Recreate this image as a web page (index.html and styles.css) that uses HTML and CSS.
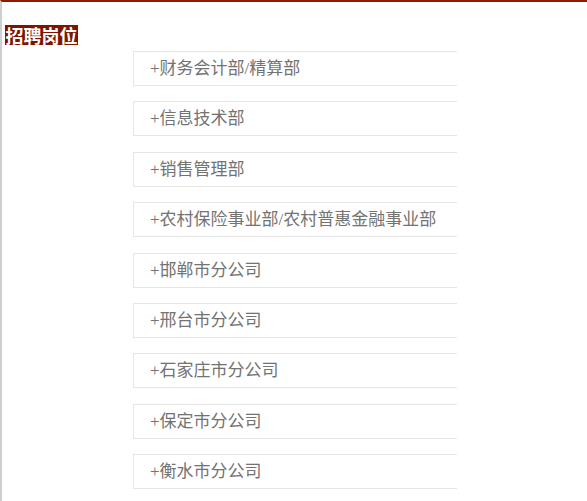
FILE: index.html
```html
<!DOCTYPE html>
<html lang="zh-CN">
<head>
    <meta charset="UTF-8">
    <meta name="viewport" content="width=device-width, initial-scale=1.0">
    <title>招聘岗位</title>
    <link rel="stylesheet" href="styles.css">
</head>
<body>
    <div class="page">
        <h2 class="title">招聘岗位</h2>

        <ul class="jobs">
            <li class="job">+财务会计部/精算部</li>
            <li class="job">+信息技术部</li>
            <li class="job">+销售管理部</li>
            <li class="job">+农村保险事业部/农村普惠金融事业部</li>
            <li class="job">+邯郸市分公司</li>
            <li class="job">+邢台市分公司</li>
            <li class="job">+石家庄市分公司</li>
            <li class="job">+保定市分公司</li>
            <li class="job">+衡水市分公司</li>
        </ul>
    </div>
</body>
</html>
```

FILE: styles.css
```css
html, body {
    margin: 0;
    padding: 0;
    background: #fff;
}
body {
    font-family: "Liberation Serif", "Noto Sans CJK SC", serif;
    overflow: hidden;
}
.page {
    min-height: 100vh;
    box-sizing: border-box;
    border-top: 2px solid #8e1a00;
    border-left: 2px solid #cfcfcf;
    padding: 23px 0 0 3px;
}
.title {
    width: fit-content;
    height: 20px;
    margin: 0;
    padding: 0 0.5px;
    background: #7e1400;
    color: #fff;
    font-family: "Noto Sans CJK SC", sans-serif;
    font-size: 18px;
    font-weight: bold;
    line-height: 20px;
}
.jobs {
    list-style: none;
    margin: 6px 0 0 128px;
    padding: 0;
}
.job {
    width: 307px;
    height: 33px;
    line-height: 33px;
    padding-left: 16px;
    margin-bottom: 15.4px;
    border: 1px solid #e6e6e6;
    border-right: none;
    color: #737373;
    font-size: 17px;
}
```
